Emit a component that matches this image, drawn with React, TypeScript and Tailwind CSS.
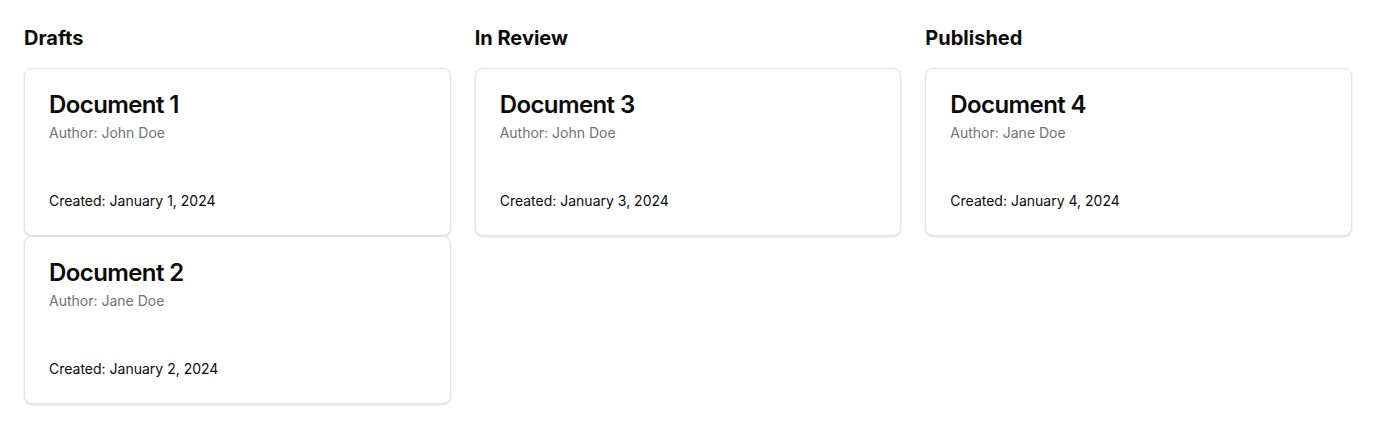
const columns = [
  {
    title: "Drafts",
    docs: [
      { name: "Document 1", author: "John Doe", created: "January 1, 2024" },
      { name: "Document 2", author: "Jane Doe", created: "January 2, 2024" },
    ],
  },
  {
    title: "In Review",
    docs: [{ name: "Document 3", author: "John Doe", created: "January 3, 2024" }],
  },
  {
    title: "Published",
    docs: [{ name: "Document 4", author: "Jane Doe", created: "January 4, 2024" }],
  },
];

function DocCard({ name, author, created }: { name: string; author: string; created: string }) {
  return (
    <div className="rounded-lg border border-[#e4e4e7] bg-white text-[#0a0a0a] shadow-sm">
      <div className="flex flex-col gap-1.5 p-6">
        <h3 className="text-2xl font-semibold leading-none tracking-tight">{name}</h3>
        <p className="text-sm text-[#71717a]">Author: {author}</p>
      </div>
      <div className="px-6 pb-6" />
      <div className="flex items-center px-6 pb-6">
        <p className="text-sm">Created: {created}</p>
      </div>
    </div>
  );
}

export default function App() {
  return (
    <div
      className="min-h-screen bg-white p-6"
      style={{ fontFamily: "Inter, 'Liberation Sans', sans-serif" }}
    >
      <div className="grid grid-cols-3 gap-6">
        {columns.map((col) => (
          <div key={col.title}>
            <h2 className="mb-4 text-xl font-bold text-[#0a0a0a]">{col.title}</h2>
            <div className="flex flex-col">
              {col.docs.map((d) => (
                <DocCard key={d.name} {...d} />
              ))}
            </div>
          </div>
        ))}
      </div>
    </div>
  );
}
